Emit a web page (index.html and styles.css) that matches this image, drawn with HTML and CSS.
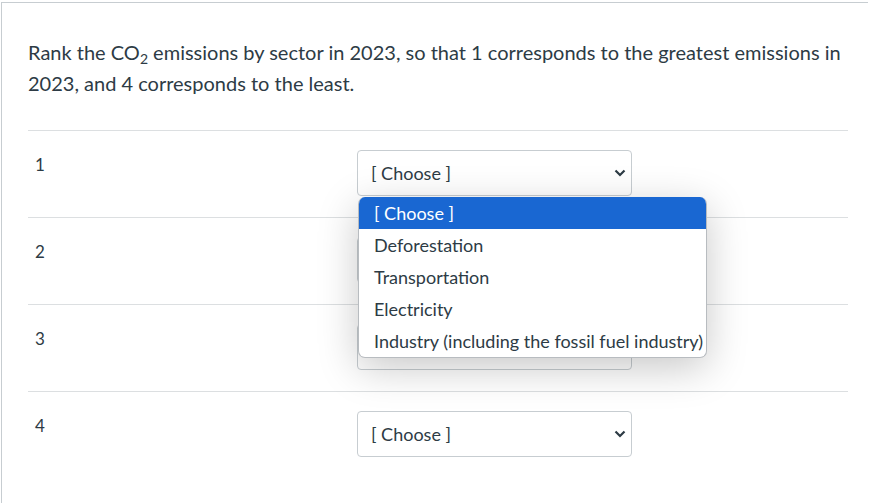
FILE: index.html
```html
<!DOCTYPE html>
<html>
<head>
<meta charset="utf-8">
<link rel="stylesheet" href="styles.css">
</head>
<body>
<div class="panel">
  <div class="content">
    <p class="question">Rank the CO<sub>2</sub> emissions by sector in 2023, so that 1 corresponds to the greatest emissions in 2023, and 4 corresponds to the least.</p>
    <div class="rows">
      <div class="row">
        <div class="num">1</div>
        <div class="select-wrap">
          <div class="select"><span>[ Choose ]</span><svg class="chev" width="12" height="8" viewBox="0 0 12 8"><path d="M1.5 1.5 L6 6 L10.5 1.5" fill="none" stroke="#2d3b45" stroke-width="2.2"/></svg></div>
          <ul class="menu">
            <li class="active">[ Choose ]</li>
            <li>Deforestation</li>
            <li>Transportation</li>
            <li>Electricity</li>
            <li>Industry (including the fossil fuel industry)</li>
          </ul>
        </div>
      </div>
      <div class="row">
        <div class="num">2</div>
        <div class="select-wrap">
          <div class="select"><span>[ Choose ]</span><svg class="chev" width="12" height="8" viewBox="0 0 12 8"><path d="M1.5 1.5 L6 6 L10.5 1.5" fill="none" stroke="#2d3b45" stroke-width="2.2"/></svg></div>
        </div>
      </div>
      <div class="row">
        <div class="num">3</div>
        <div class="select-wrap">
          <div class="select"><span>[ Choose ]</span><svg class="chev" width="12" height="8" viewBox="0 0 12 8"><path d="M1.5 1.5 L6 6 L10.5 1.5" fill="none" stroke="#2d3b45" stroke-width="2.2"/></svg></div>
        </div>
      </div>
      <div class="row">
        <div class="num">4</div>
        <div class="select-wrap">
          <div class="select"><span>[ Choose ]</span><svg class="chev" width="12" height="8" viewBox="0 0 12 8"><path d="M1.5 1.5 L6 6 L10.5 1.5" fill="none" stroke="#2d3b45" stroke-width="2.2"/></svg></div>
        </div>
      </div>
    </div>
  </div>
</div>
</body>
</html>
```
FILE: styles.css
```css
html, body {
  margin: 0;
  padding: 0;
  background: #fff;
}
body {
  font-family: Lato, "Noto Sans", sans-serif;
  color: #2d3b45;
}
.panel {
  margin: 2px 3px 0 1px;
  border-top: 1px solid #c7cdd1;
  border-left: 1px solid #c7cdd1;
  height: 520px;
}
.content {
  padding: 34px 20px 0 26px;
}
.question {
  margin: 0;
  font-size: 20px;
  line-height: 31px;
}
.question sub {
  font-size: 14px;
  line-height: 0;
  vertical-align: -4px;
}
.rows {
  margin-top: 31px;
}
.row {
  display: grid;
  grid-template-columns: 329px 275px;
  border-top: 1px solid #dcdfe1;
  padding: 19px 0 21px;
}
.num {
  padding: 3px 0 0 7px;
  font-size: 17px;
  line-height: 24px;
}
.select-wrap {
  position: relative;
}
.select {
  height: 46px;
  box-sizing: border-box;
  border: 1px solid #c7cdd1;
  border-radius: 4px;
  display: flex;
  align-items: center;
  justify-content: space-between;
  padding: 0 5px 0 13px;
  font-size: 18px;
}
.menu {
  position: absolute;
  top: 47px;
  left: 1px;
  width: 349px;
  margin: 0;
  padding: 0;
  list-style: none;
  background: #fff;
  border: 1px solid #b8bcc0;
  border-top: none;
  border-radius: 7px;
  overflow: hidden;
  box-shadow: 0 10px 40px rgba(0, 0, 0, 0.22);
  z-index: 5;
  box-sizing: border-box;
}
.menu li {
  height: 32px;
  line-height: 32px;
  padding-left: 15px;
  font-size: 18px;
  white-space: nowrap;
}
.menu li.active {
  background: #1967d2;
  color: #fff;
}
```
